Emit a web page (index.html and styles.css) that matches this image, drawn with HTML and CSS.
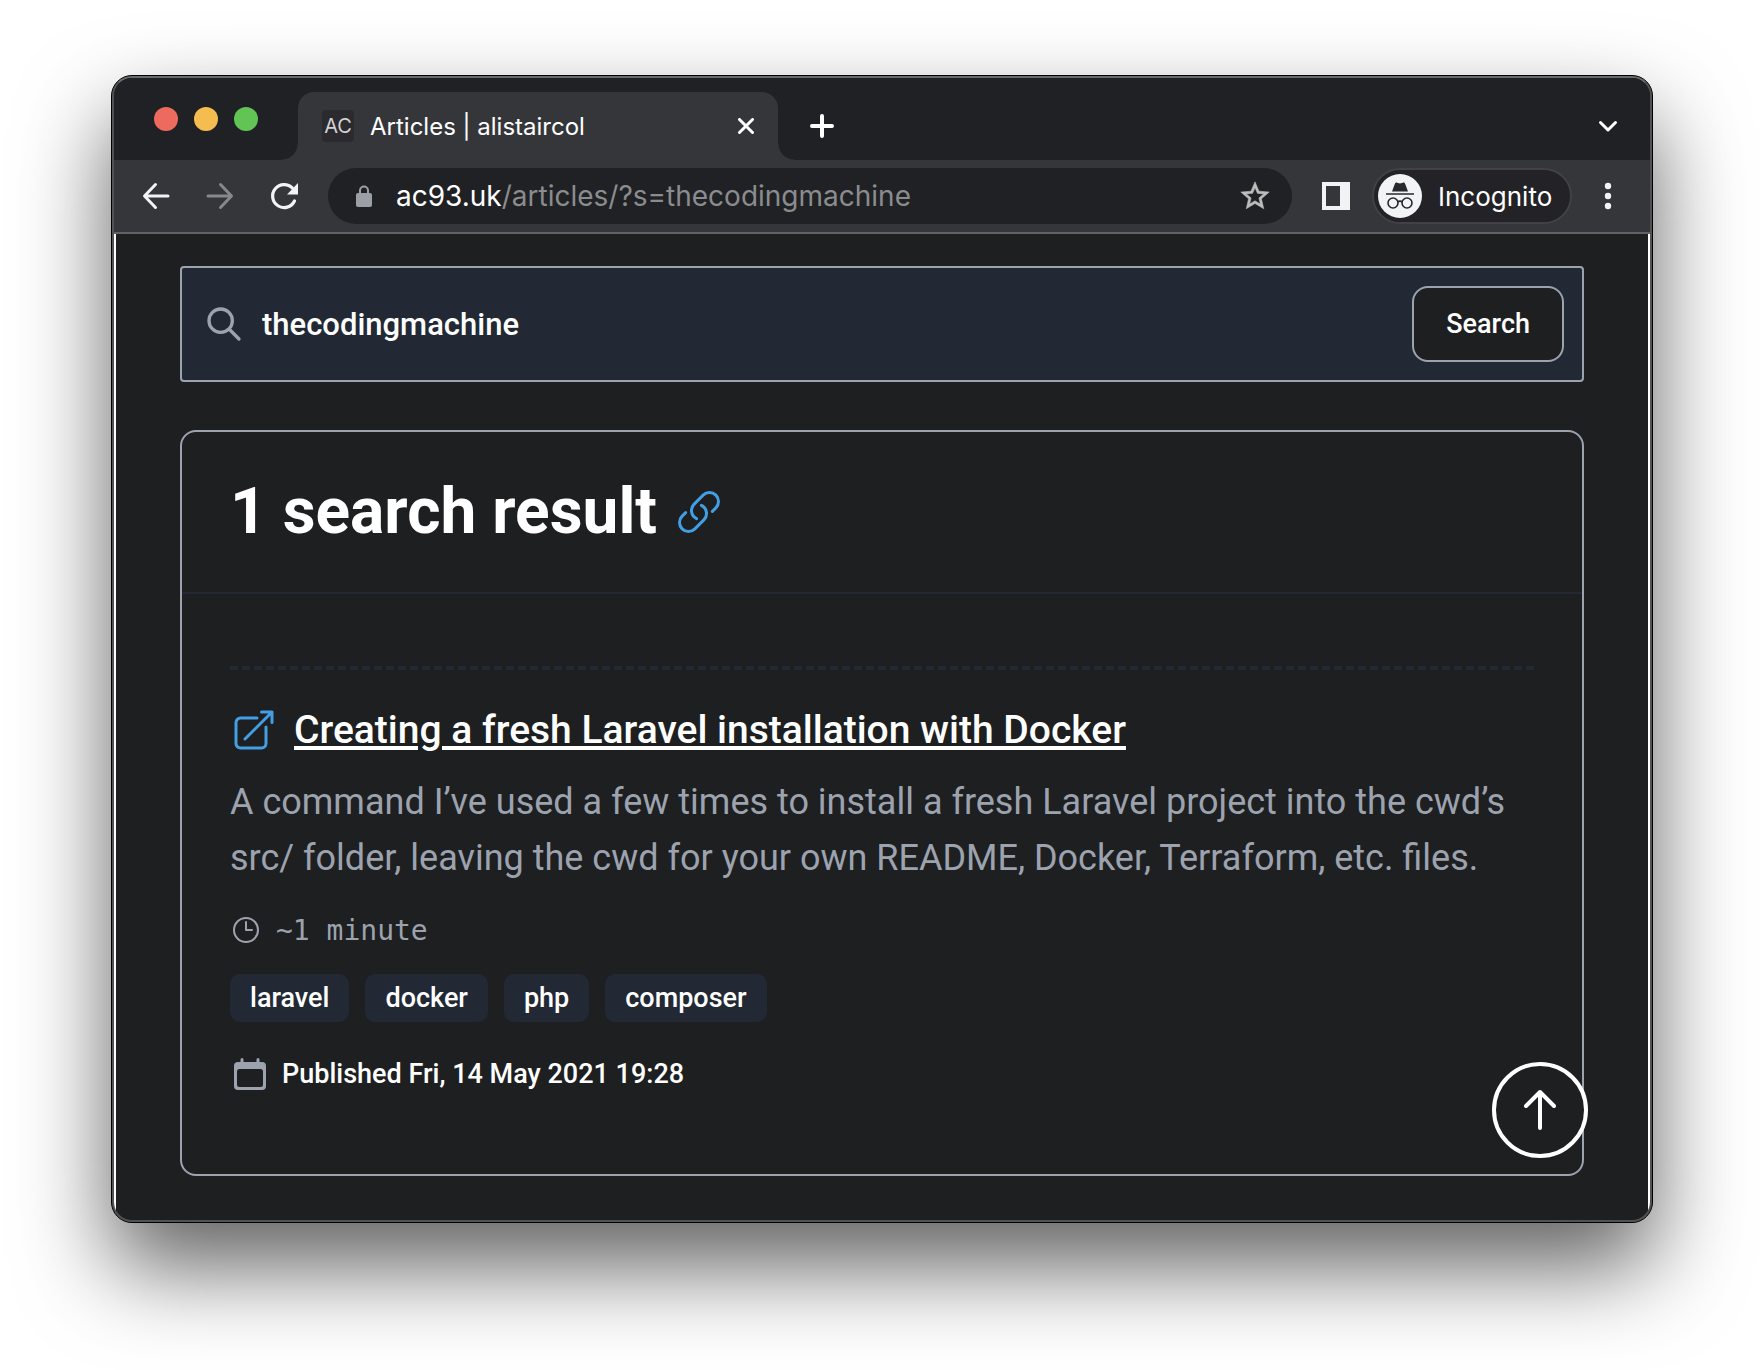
FILE: index.html
```html
<!DOCTYPE html>
<html lang="en">
<head>
<meta charset="utf-8">
<meta name="viewport" content="width=device-width, initial-scale=1">
<title>Articles | alistaircol</title>
<link rel="stylesheet" href="styles.css">
</head>
<body>
<div class="window">
  <div class="frame">
    <header class="tab-strip">
      <div class="lights">
        <button class="light light-close" aria-label="Close window"></button>
        <button class="light light-minimise" aria-label="Minimise window"></button>
        <button class="light light-zoom" aria-label="Zoom window"></button>
      </div>
      <div class="tab">
        <span class="favicon">AC</span>
        <span class="tab-title">Articles | alistaircol</span>
        <button class="icon-button" aria-label="Close tab">
          <svg width="16" height="16" viewBox="0 0 16 16" fill="none" stroke="#fff" stroke-width="3" stroke-linecap="round"><path d="M1.5 1.5l13 13M14.5 1.5l-13 13"/></svg>
        </button>
      </div>
      <button class="icon-button strip-button" aria-label="New tab">
        <svg width="24" height="24" viewBox="0 0 24 24" fill="none" stroke="#fff" stroke-width="4" stroke-linecap="round"><path d="M12 2v20M2 12h20"/></svg>
      </button>
      <button class="icon-button strip-button tab-search" aria-label="Search tabs">
        <svg width="20" height="20" viewBox="0 0 20 20" fill="none" stroke="#fff" stroke-width="3" stroke-linecap="round" stroke-linejoin="round"><path d="M2.5 6.5l7.500 7.500 7.500-7.500"/></svg>
      </button>
    </header>

    <nav class="toolbar" aria-label="Browser">
      <div class="nav-buttons">
        <button class="icon-button" aria-label="Back">
          <svg width="40" height="40" viewBox="0 0 40 40" fill="none" stroke="#f1f3f4" stroke-width="3" stroke-linecap="round" stroke-linejoin="round"><path d="M32 20H9M19.500 8.500L8.500 20l11 11.500"/></svg>
        </button>
        <button class="icon-button" aria-label="Forward">
          <svg width="40" height="40" viewBox="0 0 40 40" fill="none" stroke="#87888b" stroke-width="3" stroke-linecap="round" stroke-linejoin="round"><path d="M8 20h23M20.500 8.500L31.500 20l-11 11.500"/></svg>
        </button>
        <button class="icon-button" aria-label="Reload">
          <svg width="40" height="40" viewBox="0 0 40 40" fill="none"><path d="M30.500 25A11.500 11.500 0 1 1 28.500 12.200" stroke="#f1f3f4" stroke-width="3.200" stroke-linecap="round"/><path d="M34 7v11.500H23z" fill="#f1f3f4"/></svg>
        </button>
      </div>
      <div class="omnibox">
        <svg width="16" height="22" viewBox="0 0 16 22" fill="none"><path d="M4 9V5.500a4 4 0 0 1 8 0V9" stroke="#9aa0a6" stroke-width="2"/><rect y="8" width="16" height="14" rx="2" fill="#9aa0a6"/></svg>
        <span class="url"><span class="url-host">ac93.uk</span>/articles/?s=thecodingmachine</span>
        <button class="icon-button" aria-label="Bookmark this page">
          <svg width="34" height="34" viewBox="0 0 24 24" fill="#bdbdbd" stroke="#bdbdbd" stroke-width=".4"><path d="M22 9.240l-7.190-.620L12 2 9.190 8.630 2 9.240l5.460 4.730L5.820 21 12 17.270 18.180 21l-1.630-7.030L22 9.240zM12 15.400l-3.760 2.270 1-4.280-3.320-2.880 4.380-.380L12 6.100l1.710 4.040 4.380.380-3.320 2.880 1 4.280L12 15.400z"/></svg>
        </button>
      </div>
      <button class="icon-button panel-button" aria-label="Side panel">
        <svg width="28" height="28" viewBox="0 0 28 28"><path fill="#f1f3f4" fill-rule="evenodd" d="M0 0h28v28H0zM4 4v20h14V4z"/></svg>
      </button>
      <button class="profile">
        <svg class="avatar" width="44" height="44" viewBox="0 0 44 44" fill="none"><circle cx="22" cy="22" r="22" fill="#f1f3f4"/><path d="M14 17.500l2.800-7.600c.4-1.100 1.200-1.500 2.300-1.200l2.900.8 2.900-.8c1.100-.3 1.900.1 2.300 1.200l2.800 7.600z" fill="#27282c"/><path d="M8 20h28M19.500 28c1.500-1 3.500-1 5 0" stroke="#27282c" stroke-width="1.600"/><circle cx="15" cy="29" r="5" stroke="#27282c" stroke-width="1.600"/><circle cx="29" cy="29" r="5" stroke="#27282c" stroke-width="1.600"/></svg>
        <span>Incognito</span>
      </button>
      <button class="icon-button" aria-label="Menu">
        <svg width="8" height="28" viewBox="0 0 8 28" fill="#f1f3f4"><circle cx="4" cy="4" r="3.200"/><circle cx="4" cy="14" r="3.200"/><circle cx="4" cy="24" r="3.200"/></svg>
      </button>
    </nav>

    <main class="page">
      <form class="search">
        <svg width="40" height="40" viewBox="0 0 24 24" fill="none" stroke="#9ca3af" stroke-width="2" stroke-linecap="round" stroke-linejoin="round"><path d="M21 21l-6-6m2-5a7 7 0 11-14 0 7 7 0 0114 0z"/></svg>
        <input class="search-input" type="text" name="s" value="thecodingmachine" aria-label="Search articles">
        <button class="search-button" type="submit">Search</button>
      </form>

      <section class="results">
        <header class="results-header">
          <h1 class="results-title">1 search result</h1>
          <a class="anchor" href="#" aria-label="Link to results">
            <svg width="48" height="48" viewBox="0 0 24 24" fill="none" stroke="#429fe3" stroke-width="1.500" stroke-linecap="round" stroke-linejoin="round"><path d="M13.190 8.688a4.500 4.500 0 011.242 7.244l-4.500 4.500a4.500 4.500 0 01-6.364-6.364l1.757-1.757m13.350-.622l1.757-1.757a4.500 4.500 0 00-6.364-6.364l-4.500 4.500a4.500 4.500 0 001.242 7.244"/></svg>
          </a>
        </header>
        <div class="results-body">
          <article class="article">
            <h2 class="article-heading">
              <svg width="48" height="48" viewBox="0 0 24 24" fill="none" stroke="#429fe3" stroke-width="1.500" stroke-linecap="round" stroke-linejoin="round"><path d="M13.500 6H5.250A2.250 2.250 0 003 8.250v10.500A2.250 2.250 0 005.250 21h10.500A2.250 2.250 0 0018 18.750V10.500m-10.500 6L21 3m0 0h-5.250M21 3v5.250"/></svg>
              <a class="article-link" href="#">Creating a fresh Laravel installation with Docker</a>
            </h2>
            <p class="summary">A command I’ve used a few times to install a fresh Laravel project into the cwd’s src/ folder, leaving the cwd for your own README, Docker, Terraform, etc. files.</p>
            <div class="reading-time">
              <svg width="32" height="32" viewBox="0 0 24 24" fill="none" stroke="#9ca3af" stroke-width="1.500" stroke-linecap="round" stroke-linejoin="round"><path d="M12 6v6h4.500m4.500 0a9 9 0 11-18 0 9 9 0 0118 0z"/></svg>
              <span>~1 minute</span>
            </div>
            <ul class="tags">
              <li class="tag">laravel</li>
              <li class="tag">docker</li>
              <li class="tag">php</li>
              <li class="tag">composer</li>
            </ul>
            <div class="published">
              <svg width="40" height="40" viewBox="0 0 40 40"><path fill="#9ca3af" fill-rule="evenodd" d="M12 4a1.500 1.500 0 0 1 1.500 1.500V8h13V5.500a1.500 1.500 0 0 1 3 0V8H32a4 4 0 0 1 4 4v20a4 4 0 0 1-4 4H8a4 4 0 0 1-4-4V12a4 4 0 0 1 4-4h2.500V5.500A1.500 1.500 0 0 1 12 4zM9.500 15A2.500 2.500 0 0 0 7 17.500v13A2.500 2.500 0 0 0 9.500 33h21a2.500 2.500 0 0 0 2.500-2.500v-13a2.500 2.500 0 0 0-2.500-2.500z"/></svg>
              <span>Published Fri, 14 May 2021 19:28</span>
            </div>
          </article>
        </div>
      </section>
    </main>
    <button class="to-top" aria-label="Back to top">
      <svg width="48" height="48" viewBox="0 0 48 48" fill="none" stroke="#fff" stroke-width="4" stroke-linecap="round" stroke-linejoin="round"><path d="M24 42V6M10 20L24 6l14 14"/></svg>
    </button>
  </div>
</div>
</body>
</html>
```
FILE: styles.css
```css
*,
*::before,
*::after {
  box-sizing: border-box;
}

body {
  margin: 0;
  padding: 75px 111px 147px;
  background: #fff;
  color: #fff;
  font-family: Roboto, "Liberation Sans", sans-serif;
  font-size: 27px;
  font-weight: 500;
}

button,
input {
  margin: 0;
  padding: 0;
  border: 0;
  background: none;
  color: inherit;
  font: inherit;
}

svg {
  display: block;
  flex: none;
}

/* Browser window */

.window {
  border: 1px solid #000;
  border-radius: 21px;
  background: #1e1f21;
  box-shadow: 0 44px 90px rgba(0, 0, 0, 0.62);
}

.frame {
  position: relative;
  overflow: hidden;
  border: 2px solid #505254;
  border-top-color: #686b6c;
  border-radius: 20px;
}

.icon-button {
  display: flex;
  align-items: center;
  justify-content: center;
  flex: none;
}

.tab-strip {
  display: flex;
  align-items: flex-end;
  height: 82px;
  padding: 0 32px 0 40px;
  background: #202124;
  font-family: Inter, "Liberation Sans", sans-serif;
  font-size: 24px;
  font-weight: 400;
}

.lights {
  display: flex;
  align-self: center;
  gap: 16px;
  margin-right: 40px;
}

.light {
  width: 24px;
  height: 24px;
  border-radius: 50%;
}

.light-close {
  background: #ed6a5f;
}

.light-minimise {
  background: #f5bd4f;
}

.light-zoom {
  background: #61c455;
}

.tab {
  position: relative;
  display: flex;
  align-items: center;
  gap: 16px;
  width: 480px;
  height: 68px;
  padding: 0 24px;
  border-radius: 16px 16px 0 0;
  background: #35363a;
}

/* Flared feet where the tab meets the toolbar */
.tab::before,
.tab::after {
  content: "";
  position: absolute;
  bottom: 0;
  width: 16px;
  height: 16px;
}

.tab::before {
  right: 100%;
  background: radial-gradient(circle at 0 0, transparent 15px, #35363a 16px);
}

.tab::after {
  left: 100%;
  background: radial-gradient(circle at 100% 0, transparent 15px, #35363a 16px);
}

.favicon {
  width: 32px;
  height: 32px;
  border-radius: 4px;
  background: #2b2a2e;
  color: #d2d2d3;
  font-size: 20px;
  line-height: 32px;
  text-align: center;
}

.tab-title {
  flex: 1;
}

.strip-button {
  height: 68px;
  margin-left: 32px;
}

.tab-search {
  margin-left: auto;
}

.toolbar {
  display: flex;
  align-items: center;
  height: 74px;
  padding: 0 38px 0 22px;
  border-bottom: 2px solid #606264;
  background: #35363a;
  font-family: Inter, "Liberation Sans", sans-serif;
  font-weight: 400;
}

.nav-buttons {
  display: flex;
  gap: 24px;
  margin-right: 24px;
}

.omnibox {
  display: flex;
  align-items: center;
  flex: 1;
  gap: 24px;
  height: 56px;
  padding: 0 20px 0 28px;
  border-radius: 28px;
  background: #202124;
}

.url {
  flex: 1;
  color: #8b8c8e;
  font-size: 28px;
}

.url-host {
  color: #fff;
}

.panel-button {
  margin: 0 22px 0 30px;
}

.profile {
  display: flex;
  align-items: center;
  gap: 16px;
  width: 200px;
  height: 56px;
  margin-right: 32px;
  padding-left: 4px;
  border: 2px solid #414146;
  border-radius: 28px;
  background: #232227;
  font-size: 26px;
}

/* Site content */

.page {
  padding: 32px 64px 44px;
  border: solid #fff;
  border-width: 0 2px;
}

.search {
  display: flex;
  align-items: center;
  gap: 18px;
  margin-bottom: 48px;
  padding: 18px 18px 18px 22px;
  border: 2px solid #9ca3af;
  border-radius: 4px;
  background: #222935;
}

.search-input {
  flex: 1;
  min-width: 0;
  font-size: 31px;
  outline: none;
}

.search-button {
  height: 76px;
  padding: 0 32px;
  border: 2px solid #9ca3af;
  border-radius: 16px;
  background: #1e1f21;
}

.results {
  border: 2px solid #9ca3af;
  border-radius: 16px;
}

.results-header {
  display: flex;
  align-items: center;
  gap: 18px;
  padding: 40px 48px;
  border-bottom: 2px solid #222935;
}

.results-title {
  margin: 0;
  font-size: 64px;
  font-weight: 700;
  line-height: 80px;
}

.results-body {
  padding: 72px 48px 80px;
}

.article {
  padding-top: 36px;
  border-top: 4px dashed #222935;
}

.article-heading {
  display: flex;
  align-items: center;
  gap: 16px;
  margin: 0 0 20px;
  font-size: 39px;
  font-weight: 500;
  line-height: 48px;
}

.article-link {
  color: #fff;
  text-decoration-thickness: 4px;
  text-underline-offset: 3px;
}

.summary {
  margin: 0 0 24px;
  color: #9ca3af;
  font-size: 36px;
  font-weight: 400;
  line-height: 56px;
}

.reading-time {
  display: flex;
  align-items: center;
  gap: 14px;
  height: 40px;
  margin-bottom: 24px;
  color: #9ca3af;
  font-family: "DejaVu Sans Mono", "Liberation Mono", monospace;
  font-size: 28px;
  font-weight: 400;
}

.tags {
  display: flex;
  gap: 16px;
  margin: 0 0 32px;
  padding: 0;
  list-style: none;
}

.tag {
  padding: 0 20px;
  border-radius: 10px;
  background: #222935;
  line-height: 48px;
}

.published {
  display: flex;
  align-items: center;
  gap: 12px;
}

.to-top {
  position: absolute;
  right: 62px;
  bottom: 62px;
  display: flex;
  align-items: center;
  justify-content: center;
  width: 96px;
  height: 96px;
  border: 4px solid #fff;
  border-radius: 50%;
  background: #1e1f21;
}
```
